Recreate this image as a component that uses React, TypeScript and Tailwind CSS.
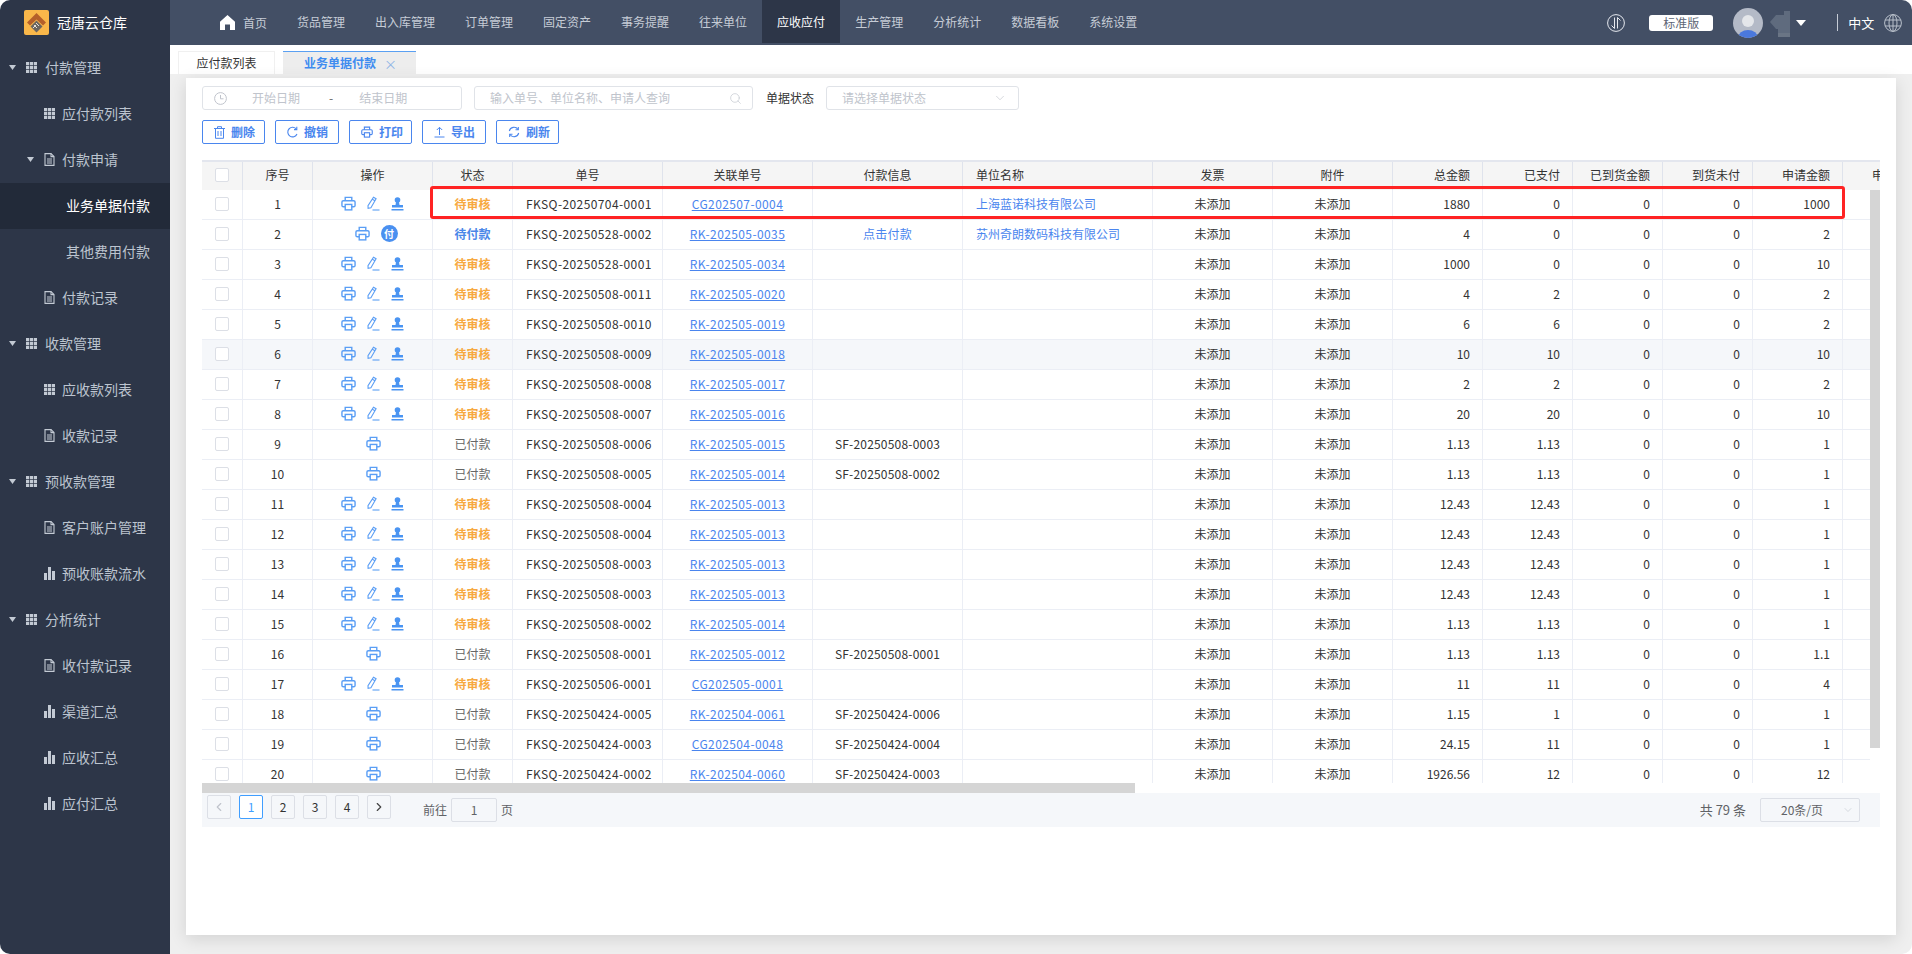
import React from "react";
import { ChevronDown, ChevronLeft, ChevronRight, Search } from "lucide-react";

const font = { fontFamily: '"Noto Sans CJK SC", "Noto Sans", sans-serif' };

const GridIcon = () => (
  <svg width="11" height="11" viewBox="0 0 11 11" className="shrink-0" fill="#c3cad4">
    <rect x="0" y="0" width="3.200" height="3.200" />
    <rect x="3.900" y="0" width="3.200" height="3.200" />
    <rect x="7.800" y="0" width="3.200" height="3.200" />
    <rect x="0" y="3.900" width="3.200" height="3.200" />
    <rect x="3.900" y="3.900" width="3.200" height="3.200" />
    <rect x="7.800" y="3.900" width="3.200" height="3.200" />
    <rect x="0" y="7.800" width="3.200" height="3.200" />
    <rect x="3.900" y="7.800" width="3.200" height="3.200" />
    <rect x="7.800" y="7.800" width="3.200" height="3.200" />
  </svg>
);

const DocIcon = () => (
  <svg width="11" height="13" viewBox="0 0 11 13" className="shrink-0" fill="none" stroke="#c3cad4" strokeWidth="1.1">
    <path d="M1 .6h6l3 3v8.8H1z" />
    <path d="M7 .6v3h3M3 6h5M3 8h5M3 10h5" />
  </svg>
);

const BarsIcon = () => (
  <svg width="11" height="13" viewBox="0 0 11 13" className="shrink-0" fill="#c3cad4">
    <rect x="0" y="6" width="3" height="7" />
    <rect x="4" y="0" width="3" height="13" />
    <rect x="8" y="4" width="3" height="9" />
  </svg>
);

const Caret = () => (
  <svg width="7" height="5" viewBox="0 0 7 5" className="shrink-0" fill="#c3cad4">
    <path d="M0 0h7L3.5 5z" />
  </svg>
);

const PrintIcon = ({ size = 15, color = "#5a9ef5" }: { size?: number; color?: string }) => (
  <svg width={size} height={size} viewBox="0 0 16 16" fill="none" stroke={color} strokeWidth="1.5" className="shrink-0">
    <path d="M4.5 5V1.5h7V5" />
    <rect x="1" y="5" width="14" height="6.5" rx="1.5" />
    <rect x="4.5" y="9" width="7" height="5.8" fill="#fff" />
  </svg>
);

const PenIcon = () => (
  <svg width="14" height="15" viewBox="0 0 14 15" fill="none" stroke="#5a9ef5" strokeWidth="1.1" className="shrink-0">
    <path d="M7.5 1.2l2.6 1.5-5.2 9-2.8.6-.1-2.6zM6.3 3.2l2.7 1.6" />
    <path d="M6.5 14h7" />
  </svg>
);

const StampIcon = () => (
  <svg width="13" height="14" viewBox="0 0 13 14" fill="#4a94f2" className="shrink-0">
    <circle cx="6.5" cy="3" r="2.8" />
    <path d="M5 5h3l.5 3H12v2.600H1V8h3.500z" />
    <rect x="0.500" y="12" width="12" height="1.500" />
  </svg>
);

const ToolIcon = ({ kind }: { kind: string }) => {
  if (kind === "delete") {
    return (
      <svg width="11" height="13" viewBox="0 0 11 13" fill="none" stroke="#4a86ee" strokeWidth="1">
        <path d="M0 2.500h11M3.500 2.500V.7h4v1.800M1.500 2.500v9.800h8V2.500M4 5v5M7 5v5" />
      </svg>
    );
  }
  if (kind === "undo") {
    return (
      <svg width="11" height="12" viewBox="0 0 11 12" fill="none" stroke="#4a86ee" strokeWidth="1.1">
        <path d="M9.500 3.300A4.800 4.800 0 1 0 10 8" />
        <path d="M9.800 .8v2.800H7" />
      </svg>
    );
  }
  if (kind === "print") return <PrintIcon size={12} color="#4a86ee" />;
  if (kind === "export") {
    return (
      <svg width="11" height="12" viewBox="0 0 11 12" fill="none" stroke="#4a86ee" strokeWidth="1">
        <path d="M5.500 9V1.500M2.800 4l2.700-2.700L8.200 4M0.500 11h10" />
      </svg>
    );
  }
  return (
    <svg width="12" height="12" viewBox="0 0 12 12" fill="none" stroke="#4a86ee" strokeWidth="1.1">
      <path d="M1.300 5A4.800 4.800 0 0 1 10 3.500M10.700 7A4.800 4.800 0 0 1 2 8.500" />
      <path d="M10.300 1v2.800H7.500M1.700 11V8.200h2.800" />
    </svg>
  );
};

const topNav = ["货品管理", "出入库管理", "订单管理", "固定资产", "事务提醒", "往来单位", "应收应付", "生产管理", "分析统计", "数据看板", "系统设置"];

const menu = [
  { t: "付款管理", lv: 1, icon: "grid", open: true },
  { t: "应付款列表", lv: 2, icon: "grid" },
  { t: "付款申请", lv: 2, icon: "doc", open: true },
  { t: "业务单据付款", lv: 3, active: true },
  { t: "其他费用付款", lv: 3 },
  { t: "付款记录", lv: 2, icon: "doc" },
  { t: "收款管理", lv: 1, icon: "grid", open: true },
  { t: "应收款列表", lv: 2, icon: "grid" },
  { t: "收款记录", lv: 2, icon: "doc" },
  { t: "预收款管理", lv: 1, icon: "grid", open: true },
  { t: "客户账户管理", lv: 2, icon: "doc" },
  { t: "预收账款流水", lv: 2, icon: "bars" },
  { t: "分析统计", lv: 1, icon: "grid", open: true },
  { t: "收付款记录", lv: 2, icon: "doc" },
  { t: "渠道汇总", lv: 2, icon: "bars" },
  { t: "应收汇总", lv: 2, icon: "bars" },
  { t: "应付汇总", lv: 2, icon: "bars" },
];

// status, order, related, pay info, company, total, paid, unpaid, applied
const rows: [string, string, string, string, string, string, string, string, string][] = [
  ["待审核", "20250704-0001", "CG202507-0004", "", "上海蓝诺科技有限公司", "1880", "0", "0", "1000"],
  ["待付款", "20250528-0002", "RK-202505-0035", "点击付款", "苏州奇朗数码科技有限公司", "4", "0", "0", "2"],
  ["待审核", "20250528-0001", "RK-202505-0034", "", "", "1000", "0", "0", "10"],
  ["待审核", "20250508-0011", "RK-202505-0020", "", "", "4", "2", "0", "2"],
  ["待审核", "20250508-0010", "RK-202505-0019", "", "", "6", "6", "0", "2"],
  ["待审核", "20250508-0009", "RK-202505-0018", "", "", "10", "10", "0", "10"],
  ["待审核", "20250508-0008", "RK-202505-0017", "", "", "2", "2", "0", "2"],
  ["待审核", "20250508-0007", "RK-202505-0016", "", "", "20", "20", "0", "10"],
  ["已付款", "20250508-0006", "RK-202505-0015", "SF-20250508-0003", "", "1.13", "1.13", "0", "1"],
  ["已付款", "20250508-0005", "RK-202505-0014", "SF-20250508-0002", "", "1.13", "1.13", "0", "1"],
  ["待审核", "20250508-0004", "RK-202505-0013", "", "", "12.43", "12.43", "0", "1"],
  ["待审核", "20250508-0004", "RK-202505-0013", "", "", "12.43", "12.43", "0", "1"],
  ["待审核", "20250508-0003", "RK-202505-0013", "", "", "12.43", "12.43", "0", "1"],
  ["待审核", "20250508-0003", "RK-202505-0013", "", "", "12.43", "12.43", "0", "1"],
  ["待审核", "20250508-0002", "RK-202505-0014", "", "", "1.13", "1.13", "0", "1"],
  ["已付款", "20250508-0001", "RK-202505-0012", "SF-20250508-0001", "", "1.13", "1.13", "0", "1.1"],
  ["待审核", "20250506-0001", "CG202505-0001", "", "", "11", "11", "0", "4"],
  ["已付款", "20250424-0005", "RK-202504-0061", "SF-20250424-0006", "", "1.15", "1", "0", "1"],
  ["已付款", "20250424-0003", "CG202504-0048", "SF-20250424-0004", "", "24.15", "11", "0", "1"],
  ["已付款", "20250424-0002", "RK-202504-0060", "SF-20250424-0003", "", "1926.56", "12", "0", "12"],
];

const cell = "h-full shrink-0 flex items-center pb-[2px] border-r border-[#ebeef5] whitespace-nowrap";
const num = `${cell} w-[90px] justify-end pr-[12px]`;

const Sidebar = () => (
  <aside className="w-[170px] shrink-0 bg-[#2d3648] flex flex-col">
    <div className="h-[45px] flex items-center pl-[24px] gap-[8px]">
      <svg width="25" height="25" viewBox="0 0 25 25" className="shrink-0">
        <rect width="25" height="25" rx="2" fill="#f9b74a" />
        <path d="M12.500 3l9.500 9.500-3 3-6.500-6-6.500 6-3-3z" fill="#b5602a" />
        <path d="M12.500 10.500l6 6-6 6-6-6z" fill="#6b6560" />
        <path d="M10 15l3 3M12 13l3 3M9 18l3-3" stroke="#e5e1da" strokeWidth="1" />
      </svg>
      <span className="text-[14px] text-white">冠唐云仓库</span>
    </div>
    {menu.map((m) => (
      <div
        key={m.t}
        className={`h-[46px] shrink-0 flex items-center pb-[2px] text-[14px] ${
          m.active ? "bg-[#222a39] text-white" : "text-[#bcc4cf]"
        } ${m.lv === 1 ? "pl-[9px]" : m.lv === 2 ? (m.open ? "pl-[27px]" : "pl-[44px]") : "pl-[66px]"}`}
      >
        {m.open && (
          <span className="mr-[10px]">
            <Caret />
          </span>
        )}
        {m.icon === "grid" && <GridIcon />}
        {m.icon === "doc" && <DocIcon />}
        {m.icon === "bars" && <BarsIcon />}
        <span className={m.lv === 3 ? "" : m.lv === 1 ? "ml-[8px]" : "ml-[7px]"}>{m.t}</span>
      </div>
    ))}
  </aside>
);

const TopBar = () => (
  <header className="h-[45px] shrink-0 bg-[#434f65] flex items-center text-[12px] text-[#c6ccd6] whitespace-nowrap">
    <div className="ml-[50px] shrink-0 flex items-center gap-[8px] pr-[15px]">
      <svg width="15" height="15" viewBox="0 0 15 15" fill="#fff" className="shrink-0">
        <path d="M7.500 0L15 6.800v8.200h-5V9.500H5V15H0V6.800z" />
      </svg>
      <span>首页</span>
    </div>
    {topNav.map((n) => (
      <div
        key={n}
        className={`h-[43px] shrink-0 self-start px-[15px] flex items-center ${n === "应收应付" ? "bg-[#2d3648] text-white" : ""}`}
      >
        {n}
      </div>
    ))}
    <svg width="18" height="18" viewBox="0 0 18 18" fill="none" stroke="#e5e8ee" strokeWidth="1" className="ml-[455px] shrink-0">
      <circle cx="9" cy="9" r="8.400" />
      <path d="M7.500 3.500v11L4.500 11.500M10.500 14.500v-11l3 3" />
    </svg>
    <div className="ml-[24px] w-[64px] h-[16px] shrink-0 bg-white rounded-[3px] text-[#5d6675] flex items-center justify-center">标准版</div>
    <svg width="30" height="30" viewBox="0 0 30 30" className="ml-[20px] shrink-0">
      <defs>
        <clipPath id="av">
          <circle cx="15" cy="15" r="15" />
        </clipPath>
      </defs>
      <circle cx="15" cy="15" r="15" fill="#b4bac7" />
      <circle cx="15" cy="13" r="6" fill="#e4e6ea" />
      <ellipse cx="15" cy="30" rx="10" ry="8" fill="#4a78dc" clipPath="url(#av)" />
    </svg>
    <svg width="26" height="28" viewBox="0 0 26 28" className="ml-[7px] shrink-0">
      <path d="M0 13L6 6h8v-4h6v24h-12v-6H6z" fill="#5f6b7e" />
      <rect x="8" y="24" width="12" height="4" fill="#6a7585" />
    </svg>
    <svg width="10" height="6" viewBox="0 0 10 6" fill="#fff" className="shrink-0">
      <path d="M0 0h10L5 6z" />
    </svg>
    <div className="ml-[31px] w-px h-[17px] shrink-0 bg-[#c6ccd6]" />
    <span className="ml-[10px] shrink-0 text-[13px] text-white">中文</span>
    <svg width="18" height="18" viewBox="0 0 18 18" fill="none" stroke="#b9c0cb" strokeWidth="1" className="ml-[10px] shrink-0">
      <circle cx="9" cy="9" r="8.400" />
      <ellipse cx="9" cy="9" rx="4" ry="8.400" />
      <path d="M9 .6v16.800M1 6h16M1 12h16" />
    </svg>
  </header>
);

const Tabs = () => (
  <div className="h-[29px] shrink-0 bg-white flex items-end pl-[8px] gap-[8px] text-[12px]">
    <div className="w-[97px] h-[23px] bg-white border-t border-x border-[#f0f0f0] flex items-center justify-center text-[#333]">应付款列表</div>
    <div className="w-[133px] h-[23px] bg-[#ededed] border-t border-[#5aa0f2] flex items-center pl-[21px] text-[#3f8cf0] font-semibold">
      <span>业务单据付款</span>
      <span className="ml-[8px] text-[13px] font-normal text-[#8fb4e6] leading-none">×</span>
    </div>
  </div>
);

const Filters = () => (
  <div className="h-[24px] flex items-center text-[12px] text-[#c0c4cc]">
    <div className="w-[260px] h-full border border-[#e0e3e8] rounded-[3px] flex items-center pl-[11px]">
      <svg width="13" height="13" viewBox="0 0 13 13" fill="none" stroke="#c0c4cc" strokeWidth="1" className="shrink-0">
        <circle cx="6.500" cy="6.500" r="5.900" />
        <path d="M6.500 3v3.800h3" />
      </svg>
      <span className="ml-[25px]">开始日期</span>
      <span className="ml-[29px] text-[#666]">-</span>
      <span className="ml-[26px]">结束日期</span>
    </div>
    <div className="ml-[12px] w-[279px] h-full border border-[#e0e3e8] rounded-[3px] flex items-center pl-[15px] pr-[10px] justify-between">
      <span>输入单号、单位名称、申请人查询</span>
      <Search size={13} strokeWidth={1.2} color="#c0c4cc" />
    </div>
    <span className="ml-[13px] text-[#333]">单据状态</span>
    <div className="ml-[12px] w-[193px] h-full border border-[#e0e3e8] rounded-[3px] flex items-center pl-[15px] pr-[11px] justify-between">
      <span>请选择单据状态</span>
      <ChevronDown size={14} strokeWidth={1.1} color="#c0c4cc" />
    </div>
  </div>
);

const tools = [
  { k: "delete", t: "删除", w: "w-[63px]" },
  { k: "undo", t: "撤销", w: "w-[64px]" },
  { k: "print", t: "打印", w: "w-[63px]" },
  { k: "export", t: "导出", w: "w-[64px]" },
  { k: "refresh", t: "刷新", w: "w-[63px]" },
];

const Toolbar = () => (
  <div className="mt-[10px] h-[24px] flex gap-[10px]">
    {tools.map((b) => (
      <div key={b.k} className={`${b.w} h-full border border-[#4a86ee] rounded-[2px] flex items-center pl-[11px] gap-[6px] text-[12px] text-[#4a86ee] font-semibold`}>
        <ToolIcon kind={b.k} />
        <span>{b.t}</span>
      </div>
    ))}
  </div>
);

const Checkbox = () => <div className="w-[14px] h-[14px] bg-white border border-[#dcdfe6] rounded-[2px]" />;

const Actions = ({ status }: { status: string }) => {
  if (status === "待审核") {
    return (
      <>
        <PrintIcon />
        <span className="ml-[10px]"><PenIcon /></span>
        <span className="ml-[11px]"><StampIcon /></span>
      </>
    );
  }
  if (status === "待付款") {
    return (
      <>
        <span className="ml-[7px]"><PrintIcon /></span>
        <span className="ml-[11px] w-[17px] h-[17px] rounded-full bg-[#4a90f0] text-white text-[10px] font-semibold flex items-center justify-center">付</span>
      </>
    );
  }
  return <span className="ml-[2px]"><PrintIcon /></span>;
};

const statusColor: Record<string, string> = {
  待审核: "text-[#f7a93f] font-semibold",
  待付款: "text-[#4a87e8] font-semibold",
  已付款: "text-[#666666]",
};

const Table = () => (
  <div className="relative mt-[16px] w-[1678px] text-[12px] text-[#333]">
    <div className="h-[30px] flex overflow-hidden bg-[#f5f5f5] border-t-2 border-[#e3e6ee] text-center">
      <div className={`${cell} !border-[#dfe3ec] w-[41px] justify-center`}><Checkbox /></div>
      <div className={`${cell} !border-[#dfe3ec] w-[70px] justify-center`}>序号</div>
      <div className={`${cell} !border-[#dfe3ec] w-[120px] justify-center`}>操作</div>
      <div className={`${cell} !border-[#dfe3ec] w-[80px] justify-center`}>状态</div>
      <div className={`${cell} !border-[#dfe3ec] w-[150px] justify-center`}>单号</div>
      <div className={`${cell} !border-[#dfe3ec] w-[150px] justify-center`}>关联单号</div>
      <div className={`${cell} !border-[#dfe3ec] w-[150px] justify-center`}>付款信息</div>
      <div className={`${cell} !border-[#dfe3ec] w-[190px] pl-[13px]`}>单位名称</div>
      <div className={`${cell} !border-[#dfe3ec] w-[120px] justify-center`}>发票</div>
      <div className={`${cell} !border-[#dfe3ec] w-[120px] justify-center`}>附件</div>
      {["总金额", "已支付", "已到货金额", "到货未付", "申请金额", "申请未付"].map((h) => (
        <div key={h} className={`${num} !border-[#dfe3ec]`}>{h}</div>
      ))}
    </div>
    <div className="h-[593px] flex">
      <div className="w-[1668px] overflow-hidden">
        {rows.map((r, i) => (
          <div key={i} className={`h-[30px] flex border-b border-[#ebeef5] ${i === 5 ? "bg-[#f5f7fa]" : "bg-white"}`}>
            <div className={`${cell} w-[41px] justify-center`}><Checkbox /></div>
            <div className={`${cell} w-[70px] justify-center`}>{i + 1}</div>
            <div className={`${cell} w-[120px] justify-center`}><Actions status={r[0]} /></div>
            <div className={`${cell} w-[80px] justify-center ${statusColor[r[0]]}`}>{r[0]}</div>
            <div className={`${cell} w-[150px] pl-[13px] tracking-[0.4px]`}>FKSQ-{r[1]}</div>
            <div className={`${cell} w-[150px] justify-center text-[#4a85ee] tracking-[0.4px] underline`}>{r[2]}</div>
            <div className={`${cell} w-[150px] justify-center tracking-[0.2px] ${r[3] === "点击付款" ? "text-[#4a85ee]" : ""}`}>{r[3]}</div>
            <div className={`${cell} w-[190px] pl-[13px] text-[#4a85ee]`}>{r[4]}</div>
            <div className={`${cell} w-[120px] justify-center`}>未添加</div>
            <div className={`${cell} w-[120px] justify-center`}>未添加</div>
            <div className={num}>{r[5]}</div>
            <div className={num}>{r[6]}</div>
            <div className={num}>0</div>
            <div className={num}>{r[7]}</div>
            <div className={num}>{r[8]}</div>
          </div>
        ))}
      </div>
      <div className="w-[10px] shrink-0 bg-white">
        <div className="h-[558px] bg-[#d5d5d5]" />
      </div>
    </div>
    <div className="h-[10px] bg-white">
      <div className="w-[933px] h-full bg-[#d5d5d5]" />
    </div>
    <div className="h-[34px] bg-[#f5f7fa] flex items-start pl-[5px] pr-[20px] text-[#606266]">
      <div className="mt-[2px] flex gap-[8px]">
        <div className="w-[24px] h-[24px] border border-[#dcdfe6] rounded-[2px] flex items-center justify-center"><ChevronLeft size={14} color="#c0c4cc" /></div>
        <div className="w-[24px] h-[24px] bg-white border border-[#409eff] rounded-[2px] flex items-center justify-center text-[#409eff]">1</div>
        {["2", "3", "4"].map((p) => (
          <div key={p} className="w-[24px] h-[24px] border border-[#dcdfe6] rounded-[2px] flex items-center justify-center text-[#333]">{p}</div>
        ))}
        <div className="w-[24px] h-[24px] border border-[#dcdfe6] rounded-[2px] flex items-center justify-center"><ChevronRight size={14} color="#444" /></div>
      </div>
      <div className="mt-[5px] ml-[32px] h-[24px] flex items-center">
        <span>前往</span>
        <div className="ml-[4px] w-[46px] h-full border border-[#dcdfe6] rounded-[2px] flex items-center justify-center">1</div>
        <span className="ml-[4px]">页</span>
      </div>
      <div className="mt-[5px] ml-auto h-[24px] flex items-center">
        <span className="text-[13px]">共 79 条</span>
        <div className="ml-[14px] w-[100px] h-full border border-[#dcdfe6] rounded-[2px] flex items-center pl-[20px] pr-[5px] justify-between">
          <span>20条/页</span>
          <ChevronDown size={12} strokeWidth={1.2} color="#c0c4cc" />
        </div>
      </div>
    </div>
    <div className="absolute left-[228px] top-[26px] w-[1415px] h-[33px] border-[3px] border-[#ff2323] rounded-[3px] pointer-events-none" />
  </div>
);

const App: React.FC = () => {
  return (
    <div style={font} className="w-[1912px] h-[954px] overflow-hidden rounded-[10px] flex bg-white">
      <Sidebar />
      <main className="flex-1 min-w-0 flex flex-col">
        <TopBar />
        <Tabs />
        <div className="flex-1 min-h-0 bg-[#efefef] pt-[4px] px-[16px] pb-[19px]">
          <div className="h-full bg-white pt-[8px] px-[16px] shadow-[0_4px_16px_rgba(0,0,0,0.12)]">
            <Filters />
            <Toolbar />
            <Table />
          </div>
        </div>
      </main>
    </div>
  );
};

export default App;
